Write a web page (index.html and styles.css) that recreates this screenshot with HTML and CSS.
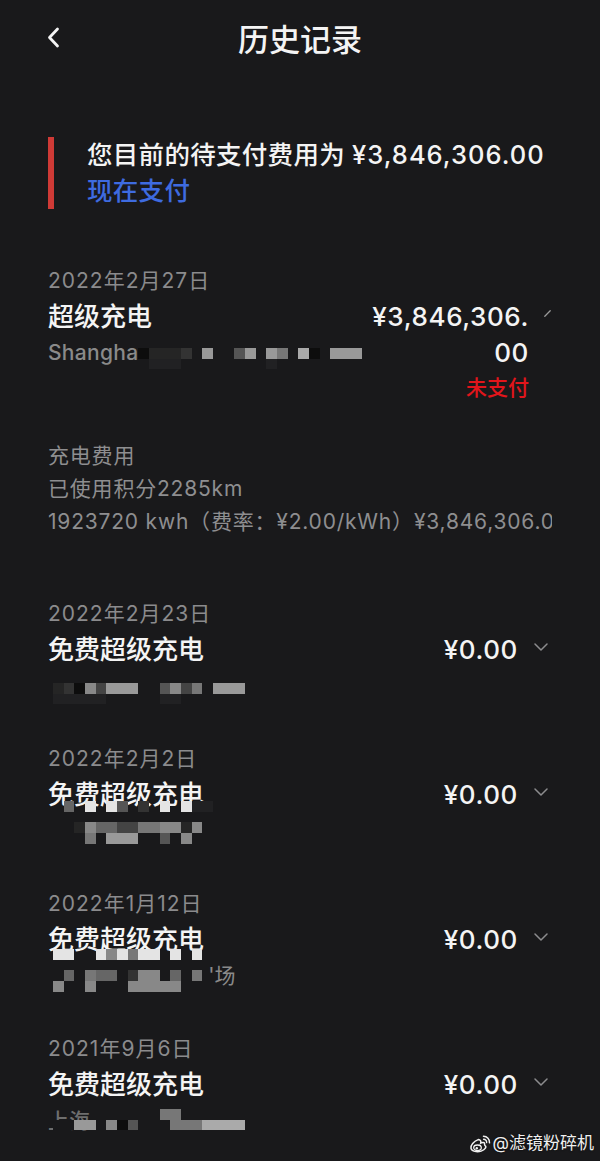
FILE: index.html
```html
<!DOCTYPE html>
<html lang="zh-CN">
<head>
<meta charset="utf-8">
<title>历史记录</title>
<link rel="stylesheet" href="styles.css">
</head>
<body>
<div class="screen">
  <header class="nav">
    <span class="back">
      <svg width="13" height="21" viewBox="0 0 13 21"><polyline points="10.5,2 2.5,10.5 10.5,19" fill="none" stroke="#f4f4f4" stroke-width="2.8" stroke-linecap="round" stroke-linejoin="round"/></svg>
    </span>
    <h1 class="title">历史记录</h1>
    <span></span>
  </header>

  <section class="notice">
    <div class="notice-bar"></div>
    <div class="notice-text">
      <p class="notice-line">您目前的待支付费用为 <span class="notice-amount">¥3,846,306.00</span></p>
      <p class="pay-link">现在支付</p>
    </div>
  </section>

  <section class="entry entry-first">
    <div class="date">2022年2月27日</div>
    <div class="row">
      <div class="left">
        <div class="name">超级充电</div>
        <div class="addr addr-inline">Shangha<div class="mosaic mosaic-wide">
          <span class="c1"></span><span class="c2"></span><span class="c2"></span><span class="c2"></span><span class="c3"></span><span class="c0"></span><span class="c9"></span><span class="c0"></span><span class="c0"></span><span class="c5"></span><span class="c9"></span><span class="c0"></span><span class="c9"></span><span class="c7"></span><span class="c0"></span><span class="ca"></span><span class="c1"></span><span class="c0"></span><span class="c9"></span><span class="c9"></span><span class="c9"></span>
          <span class="c0"></span><span class="cf"></span><span class="cf"></span><span class="cf"></span><span class="c0"></span><span class="c0"></span><span class="c0"></span><span class="c0"></span><span class="c0"></span><span class="c0"></span><span class="c0"></span><span class="c0"></span><span class="cf"></span><span class="c0"></span><span class="c0"></span><span class="c0"></span><span class="c0"></span><span class="c0"></span><span class="c0"></span><span class="c0"></span><span class="c0"></span>
        </div></div>
      </div>
      <div class="right right-first">
        <div class="amount-col">
          <div class="amount">¥3,846,306.<br>00</div>
          <div class="status">未支付</div>
        </div>
        <svg class="slash" width="7" height="7" viewBox="0 0 7 7"><line x1="0.8" y1="6.2" x2="6.2" y2="0.8" stroke="#9a9a9a" stroke-width="1.3" stroke-linecap="round"/></svg>
      </div>
    </div>
    <div class="details">
      <p class="detail">充电费用</p>
      <p class="detail">已使用积分2285km</p>
      <p class="detail">1923720 kwh（费率：¥2.00/kWh）¥3,846,306.00</p>
    </div>
  </section>

  <section class="entry entry-free entry-second">
    <div class="date">2022年2月23日</div>
    <div class="row">
      <div class="name">免费超级充电</div>
      <div class="right">
        <div class="amount">¥0.00</div>
        <svg class="chev" width="14" height="8" viewBox="0 0 14 8"><polyline points="1,1 7,7 13,1" fill="none" stroke="#8c8c8e" stroke-width="1.5" stroke-linecap="round" stroke-linejoin="round"/></svg>
      </div>
    </div>
    <div class="addr addr-block">
      <div class="mosaic m-e2">
        <span class="c2"></span><span class="c3"></span><span class="c1"></span><span class="c8"></span><span class="c4"></span><span class="c9"></span><span class="c9"></span><span class="c9"></span><span class="c0"></span><span class="c0"></span><span class="c5"></span><span class="c8"></span><span class="c4"></span><span class="c7"></span><span class="c0"></span><span class="c9"></span><span class="c9"></span><span class="c9"></span>
        <span class="cf"></span><span class="cf"></span><span class="cf"></span><span class="cf"></span><span class="cf"></span><span class="c0"></span><span class="c0"></span><span class="c0"></span><span class="c0"></span><span class="c0"></span><span class="cf"></span><span class="cf"></span><span class="c0"></span><span class="c0"></span><span class="c0"></span><span class="c0"></span><span class="c0"></span><span class="c0"></span>
      </div>
    </div>
  </section>

  <section class="entry entry-free">
    <div class="date">2022年2月2日</div>
    <div class="row">
      <div class="name">免费超级充电</div>
      <div class="right">
        <div class="amount">¥0.00</div>
        <svg class="chev" width="14" height="8" viewBox="0 0 14 8"><polyline points="1,1 7,7 13,1" fill="none" stroke="#8c8c8e" stroke-width="1.5" stroke-linecap="round" stroke-linejoin="round"/></svg>
      </div>
    </div>
    <div class="addr addr-block">
      <div class="mosaic m-e3">
        <span class="c0"></span><span class="c6"></span><span class="c0"></span><span class="cw"></span><span class="c0"></span><span class="cw"></span><span class="c5"></span><span class="c0"></span><span class="c3"></span><span class="c0"></span><span class="cw"></span><span class="c0"></span><span class="cw"></span><span class="cf"></span><span class="cf"></span><span class="c0"></span><span class="c0"></span><span class="c0"></span>
        <span class="c0"></span><span class="c0"></span><span class="c0"></span><span class="c0"></span><span class="c0"></span><span class="c0"></span><span class="c0"></span><span class="c0"></span><span class="c0"></span><span class="c0"></span><span class="c0"></span><span class="c0"></span><span class="c0"></span><span class="c0"></span><span class="c0"></span><span class="c0"></span><span class="c0"></span><span class="c0"></span>
        <span class="c0"></span><span class="c0"></span><span class="c2"></span><span class="c8"></span><span class="c6"></span><span class="c6"></span><span class="c4"></span><span class="c4"></span><span class="c7"></span><span class="c7"></span><span class="c8"></span><span class="c8"></span><span class="c2"></span><span class="c8"></span><span class="c0"></span><span class="c0"></span><span class="c0"></span><span class="c0"></span>
        <span class="c0"></span><span class="c0"></span><span class="c0"></span><span class="c7"></span><span class="c0"></span><span class="c9"></span><span class="c9"></span><span class="c9"></span><span class="c0"></span><span class="c0"></span><span class="c5"></span><span class="c0"></span><span class="c8"></span><span class="c0"></span><span class="c0"></span><span class="c0"></span><span class="c0"></span><span class="c0"></span>
      </div>
    </div>
  </section>

  <section class="entry entry-free">
    <div class="date">2022年1月12日</div>
    <div class="row">
      <div class="name">免费超级充电</div>
      <div class="right">
        <div class="amount">¥0.00</div>
        <svg class="chev" width="14" height="8" viewBox="0 0 14 8"><polyline points="1,1 7,7 13,1" fill="none" stroke="#8c8c8e" stroke-width="1.5" stroke-linecap="round" stroke-linejoin="round"/></svg>
      </div>
    </div>
    <div class="addr addr-block addr-tail">
      <div class="mosaic m-e4">
        <span class="cw"></span><span class="cw"></span><span class="c0"></span><span class="c0"></span><span class="cw"></span><span class="c8"></span><span class="cw"></span><span class="c7"></span><span class="cw"></span><span class="cw"></span><span class="c0"></span><span class="cw"></span><span class="c0"></span><span class="cw"></span>
        <span class="c0"></span><span class="c0"></span><span class="c0"></span><span class="c0"></span><span class="c0"></span><span class="c0"></span><span class="c0"></span><span class="c0"></span><span class="c0"></span><span class="c0"></span><span class="c0"></span><span class="c0"></span><span class="c0"></span><span class="c0"></span>
        <span class="c0"></span><span class="c6"></span><span class="c0"></span><span class="c7"></span><span class="c6"></span><span class="c6"></span><span class="c0"></span><span class="c3"></span><span class="c8"></span><span class="c8"></span><span class="c0"></span><span class="c6"></span><span class="c0"></span><span class="c7"></span>
        <span class="c8"></span><span class="c0"></span><span class="c0"></span><span class="c8"></span><span class="c0"></span><span class="c0"></span><span class="c0"></span><span class="c8"></span><span class="c8"></span><span class="c8"></span><span class="c8"></span><span class="c8"></span><span class="c0"></span><span class="c0"></span>
      </div>
      <span class="tail">'场</span>
    </div>
  </section>

  <section class="entry entry-free">
    <div class="date">2021年9月6日</div>
    <div class="row">
      <div class="name">免费超级充电</div>
      <div class="right">
        <div class="amount">¥0.00</div>
        <svg class="chev" width="14" height="8" viewBox="0 0 14 8"><polyline points="1,1 7,7 13,1" fill="none" stroke="#8c8c8e" stroke-width="1.5" stroke-linecap="round" stroke-linejoin="round"/></svg>
      </div>
    </div>
    <div class="addr addr-block addr-stack">
      <span class="addr-text">上海</span>
      <div class="mosaic m-e5">
        <span class="c0"></span><span class="c0"></span><span class="c0"></span><span class="c0"></span><span class="c0"></span><span class="c0"></span><span class="c0"></span><span class="c0"></span><span class="c0"></span><span class="c0"></span><span class="c7"></span><span class="c7"></span><span class="c0"></span><span class="c0"></span><span class="c0"></span><span class="c0"></span><span class="c0"></span><span class="c0"></span>
        <span class="cb"></span><span class="cb"></span><span class="c9"></span><span class="c9"></span><span class="cb"></span><span class="c8"></span><span class="c1"></span><span class="c5"></span><span class="c0"></span><span class="c0"></span><span class="c0"></span><span class="c7"></span><span class="c7"></span><span class="c7"></span><span class="ca"></span><span class="ca"></span><span class="ca"></span><span class="ca"></span>
      </div>
    </div>
  </section>

  <div class="watermark">
    <svg class="weibo" width="22" height="19" viewBox="0 0 22 19">
      <path d="M9.2 5.6C4.8 7.4 1.3 11 2 14.3c.7 3.2 6 4.1 10.2 2.8 4.3-1.4 5.6-4.4 3.8-5.6-.8-.5-.3-1.6-.5-2.3-.4-1.1-2.6-.6-3.8 0 .5-1.6.1-3.4-2.5-3.6z" fill="none" stroke="#f2f2f2" stroke-width="1.5"/>
      <ellipse cx="8.5" cy="13.8" rx="3.8" ry="2.8" fill="none" stroke="#f2f2f2" stroke-width="1.3"/>
      <circle cx="7.8" cy="14.2" r="1.2" fill="#f2f2f2"/>
      <path d="M14.5 2.2a6 6 0 0 1 6 6.6" fill="none" stroke="#f2f2f2" stroke-width="1.5" stroke-linecap="round"/>
      <path d="M14.6 5.2a3 3 0 0 1 3 3.4" fill="none" stroke="#f2f2f2" stroke-width="1.4" stroke-linecap="round"/>
    </svg>
    <span class="wm-text">@滤镜粉碎机</span>
  </div>
</div>
</body>
</html>
```

FILE: styles.css
```css
* { box-sizing: border-box; }
html, body { margin: 0; padding: 0; background: #19191b; }
body {
  font-family: "Inter", "Noto Sans CJK SC", sans-serif;
  color: #f4f4f4;
}
p, h1 { margin: 0; font-weight: inherit; }

.screen {
  position: relative;
  width: 600px;
  height: 1161px;
  overflow: hidden;
  background: #19191b;
}

/* header */
.nav {
  height: 80px;
  display: grid;
  grid-template-columns: 1fr auto 1fr;
  align-items: center;
  padding: 0 47px;
}
.back { display: flex; margin-bottom: 5px; }
.title {
  font-size: 31px;
  line-height: 80px;
  font-weight: 500;
  color: #f4f4f4;
}

/* notice */
.notice {
  margin-top: 57px;
  margin-left: 48px;
  display: flex;
  gap: 33px;
}
.notice-bar {
  width: 6px;
  height: 72px;
  background: #cf3a36;
}
.notice-text {
  font-size: 25.5px;
  line-height: 36px;
  font-weight: 500;
  letter-spacing: 0.3px;
}
.notice-line { color: #f4f4f4; white-space: nowrap; }
.notice-amount { letter-spacing: 1px; }
.pay-link { color: #3e6be0; }

/* entries */
.entry {
  padding: 0 48px;
}
.entry-first { margin-top: 54px; }
.entry-second { margin-top: 58px; }
.entry-free { height: 145px; }

.date {
  font-size: 21px;
  line-height: 36px;
  color: #8b8b8d;
  letter-spacing: 1px;
}
.row {
  display: flex;
  justify-content: space-between;
  align-items: flex-start;
}
.name {
  font-size: 26px;
  line-height: 36px;
  font-weight: 500;
  color: #f4f4f4;
}
.right {
  display: flex;
  align-items: flex-start;
  gap: 16px;
}
.amount {
  font-size: 26px;
  line-height: 36px;
  font-weight: 500;
  letter-spacing: 0.6px;
  color: #f4f4f4;
  text-align: right;
}
.chev { margin-top: 11px; margin-right: 4px; }

.right-first { gap: 15px; }
.amount-col {
  display: flex;
  flex-direction: column;
  align-items: flex-end;
}
.status {
  font-size: 21px;
  line-height: 33px;
  color: #e2151b;
  font-weight: 500;
}
.slash { margin-top: 11px; margin-right: 1px; }

.addr {
  font-size: 21px;
  line-height: 36px;
  color: #8a8a8a;
  font-weight: 500;
}
.addr-inline {
  display: flex;
  align-items: center;
  letter-spacing: 0.3px;
}

/* details */
.details {
  margin-top: 35px;
  overflow: hidden;
}
.detail {
  font-size: 21px;
  line-height: 33px;
  color: #8e8e90;
  white-space: nowrap;
  letter-spacing: 0.8px;
}

/* mosaic (pixelated address) */
.mosaic {
  display: grid;
  grid-template-columns: repeat(18, 10.67px);
  grid-auto-rows: 10.67px;
}
.mosaic-wide {
  grid-template-columns: repeat(21, 10.67px);
  margin-top: 11px;
}
.addr-block { height: 36px; }
.m-e2 { margin: 15px 0 0 5px; }
.m-e3 { margin: -12px 0 0 5px; }
.m-e4 { margin: -9px 0 0 5px; grid-template-columns: repeat(14, 10.67px); }
.m-e5 { margin: 6px 0 0 5px; }

.addr-tail {
  display: flex;
  align-items: flex-start;
}
.tail {
  margin: 7px 0 0 6px;
  font-size: 21px;
  line-height: 21px;
  color: #8a8a8a;
  font-weight: 400;
}
.addr-stack { display: grid; }
.addr-stack > * { grid-area: 1 / 1; }
.addr-text {
  margin-top: 7px;
  line-height: 21px;
  color: #6e6e6e;
}

.c0 { background: transparent; }
.cb { background: #19191b; }
.cf { background: #212123; }
.c1 { background: #0d0d0d; }
.c2 { background: #252525; }
.c3 { background: #333; }
.c4 { background: #444; }
.c5 { background: #555; }
.c6 { background: #666; }
.c7 { background: #777; }
.c8 { background: #888; }
.c9 { background: #999; }
.ca { background: #aaa; }
.cw { background: #e4e4e4; }

/* watermark overlay */
.watermark {
  position: absolute;
  right: 6px;
  bottom: 6px;
  display: flex;
  align-items: center;
  gap: 2px;
  color: #f0f0f0;
  text-shadow: 0 0 2px rgba(0,0,0,0.8);
}
.wm-text {
  font-size: 17px;
  line-height: 24px;
}
```
